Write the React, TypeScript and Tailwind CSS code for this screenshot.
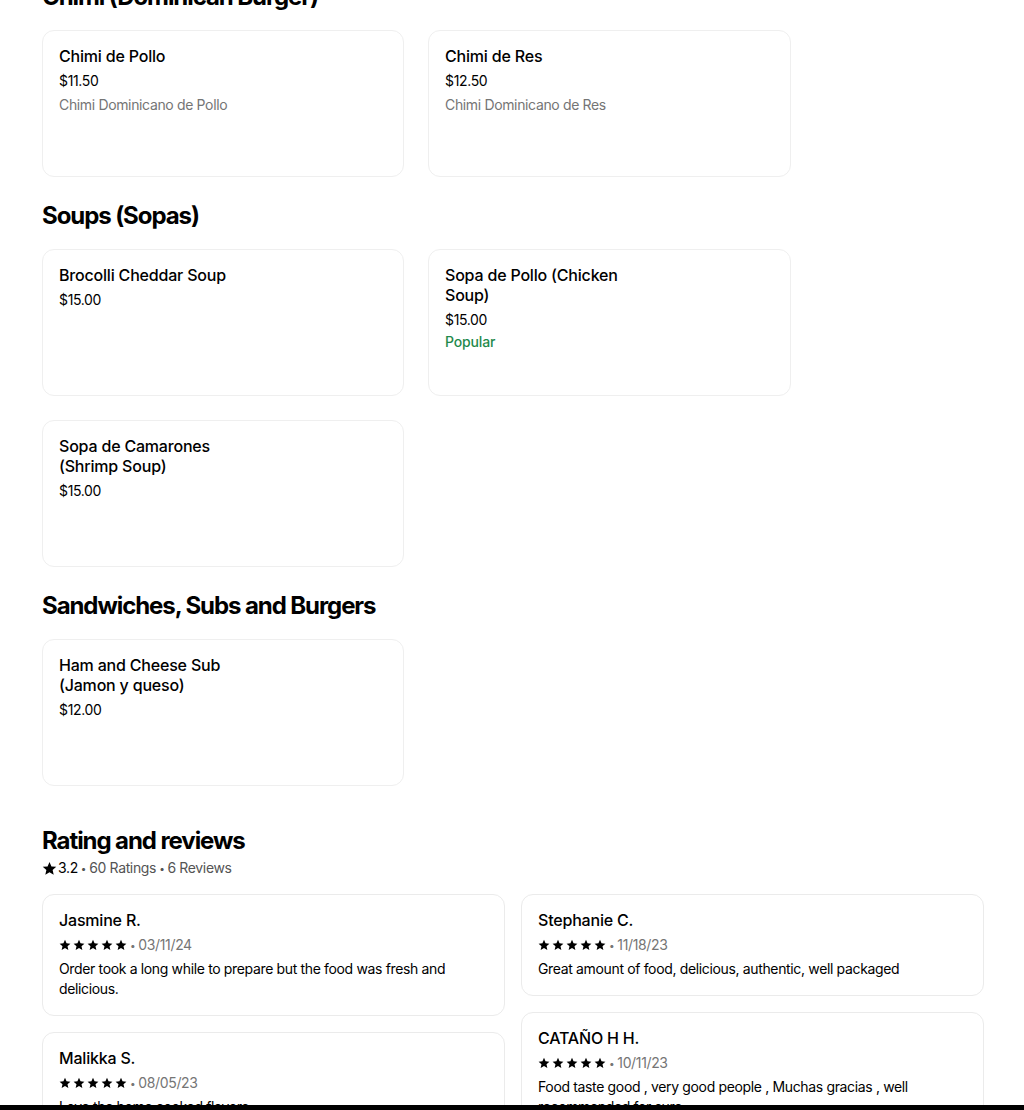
import React from "react";

type Item = { name: string; price: string; desc?: string; popular?: boolean };

const sections: { title: string; items: Item[] }[] = [
  {
    title: "Chimi (Dominican Burger)",
    items: [
      { name: "Chimi de Pollo", price: "$11.50", desc: "Chimi Dominicano de Pollo" },
      { name: "Chimi de Res", price: "$12.50", desc: "Chimi Dominicano de Res" },
    ],
  },
  {
    title: "Soups (Sopas)",
    items: [
      { name: "Brocolli Cheddar Soup", price: "$15.00" },
      { name: "Sopa de Pollo (Chicken Soup)", price: "$15.00", popular: true },
      { name: "Sopa de Camarones (Shrimp Soup)", price: "$15.00" },
    ],
  },
  {
    title: "Sandwiches, Subs and Burgers",
    items: [{ name: "Ham and Cheese Sub (Jamon y queso)", price: "$12.00" }],
  },
];

const leftReviews = [
  { name: "Jasmine R.", date: "03/11/24", text: "Order took a long while to prepare but the food was fresh and delicious." },
  { name: "Malikka S.", date: "08/05/23", text: "Love the home cooked flavors." },
];

const rightReviews = [
  { name: "Stephanie C.", date: "11/18/23", text: "Great amount of food, delicious, authentic, well packaged" },
  { name: "CATAÑO H H.", date: "10/11/23", text: "Food taste good , very good people , Muchas gracias , well recommended for sure." },
];

function Star({ size = 12 }: { size?: number }) {
  return (
    <svg width={size} height={size} viewBox="0 0 24 24" fill="currentColor">
      <path d="M12 1.5l3.1 7.1 7.7.7-5.8 5.1 1.7 7.6L12 18l-6.7 4 1.7-7.6L1.2 9.3l7.7-.7z" />
    </svg>
  );
}

function MenuCard({ item }: { item: Item }) {
  return (
    <div className="h-[147px] rounded-xl border border-[#efefef] bg-white px-4 pt-[15px]">
      <div className="max-w-[200px] text-[16px] leading-5 font-medium tracking-[-0.012em] text-black">{item.name}</div>
      <div className="mt-[5px] text-[14px] leading-5 tracking-[-0.025em] text-black">{item.price}</div>
      {item.desc && <div className="mt-1 text-[14px] leading-5 tracking-[-0.025em] text-[#757575]">{item.desc}</div>}
      {item.popular && <div className="mt-[2px] text-[14px] leading-5 font-medium tracking-[-0.01em] text-[#1f8a4c]">Popular</div>}
    </div>
  );
}

function ReviewCard({ r }: { r: { name: string; date: string; text: string } }) {
  return (
    <div className="rounded-xl border border-[#ebebeb] bg-white px-4 pt-[13px] pb-4">
      <div className="text-[16px] leading-6 font-medium tracking-[-0.012em] text-black">{r.name}</div>
      <div className="mt-[3px] flex items-center text-[14px] leading-5 tracking-[-0.025em]">
        <span className="flex gap-[2px] text-black">
          <Star />
          <Star />
          <Star />
          <Star />
          <Star />
        </span>
        <span className="mx-[3px] text-[10px] text-[#757575]">•</span>
        <span className="text-[#757575]">{r.date}</span>
      </div>
      <div className="mt-1 text-[14px] leading-5 tracking-[-0.025em] text-black">{r.text}</div>
    </div>
  );
}

export default function App() {
  return (
    <div className="min-h-screen bg-white font-['Inter','Liberation_Sans',sans-serif] text-black">
      <div className="mt-[-19px] px-[42px]">
        {sections.map((s) => (
          <section key={s.title} className="mb-[23px]">
            <h2 className="text-[24px] leading-8 font-bold tracking-[-0.045em]">{s.title}</h2>
            <div className="mt-[17px] grid grid-cols-[362px_363px] gap-x-6 gap-y-6">
              {s.items.map((it) => (
                <MenuCard key={it.name} item={it} />
              ))}
            </div>
          </section>
        ))}

        <section className="mt-[39px] w-[942px]">
          <h2 className="text-[24px] leading-8 font-bold tracking-[-0.045em]">Rating and reviews</h2>
          <div className="mt-[1px] flex items-center text-[14px] leading-5 tracking-[-0.025em] text-[#545454]">
            <span className="mr-[1px] text-black">
              <Star size={15} />
            </span>
            <span className="text-black">3.2</span>
            <span className="mx-[3px] text-[10px]">•</span>
            <span>60 Ratings</span>
            <span className="mx-[3px] text-[10px]">•</span>
            <span>6 Reviews</span>
          </div>
          <div className="mt-4 flex gap-4">
            <div className="flex flex-1 flex-col gap-4">
              {leftReviews.map((r) => (
                <ReviewCard key={r.name} r={r} />
              ))}
            </div>
            <div className="flex flex-1 flex-col gap-4">
              {rightReviews.map((r) => (
                <ReviewCard key={r.name} r={r} />
              ))}
            </div>
          </div>
        </section>
      </div>
      <div className="fixed bottom-0 left-0 h-[5px] w-full bg-black" />
    </div>
  );
}
